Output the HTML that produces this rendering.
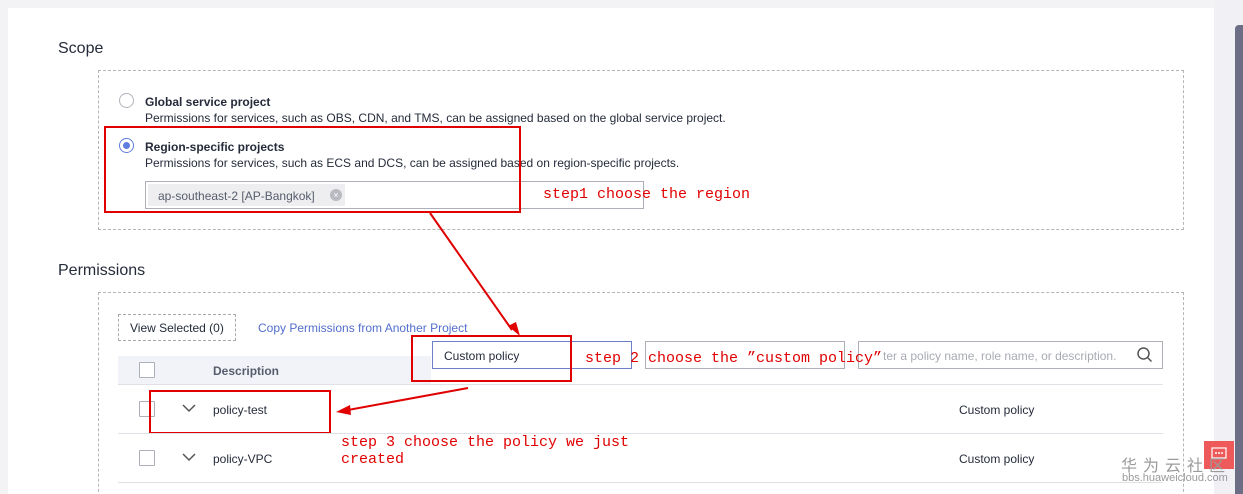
<!DOCTYPE html>
<html style="width:1243px;height:494px;overflow:hidden"><head><meta charset="utf-8"><style>
*{margin:0;padding:0;box-sizing:border-box}
body{width:1243px;height:494px;overflow:hidden;background:#f3f3f5;font-family:"Liberation Sans",sans-serif;position:relative;color:#252b3a}
.a{position:absolute}
.panel{left:8px;top:8px;width:1206px;height:486px;background:#fff}
.h{font-size:16px;color:#252b3a}
.dash{border:1px dashed #b5b5b5}
.t{font-size:12px;white-space:nowrap}
.b{font-weight:bold}
.red{border:2px solid #e00000}
.mono{font-family:"Liberation Mono",monospace;color:#e00000;font-size:15px;white-space:nowrap}
.cb{width:16px;height:16px;border:1px solid #adb0b8;background:#fff;border-radius:1px}
.line{height:1px;background:#dfe1e6}
</style></head><body>
<div class="a panel"></div>
<div class="a" style="left:1214px;top:0;width:29px;height:494px;background:#f0f0f5"></div>
<div class="a" style="left:1235px;top:25px;width:8px;height:469px;background:#6c6e86;border-radius:4px 0 0 0"></div>

<div class="a h" style="left:58px;top:40px">Scope</div>
<div class="a dash" style="left:98px;top:70px;width:1086px;height:160px"></div>

<div class="a" style="left:119px;top:93px;width:15px;height:15px;border:1px solid #b0b3bb;border-radius:50%"></div>
<div class="a t b" style="left:145px;top:95px">Global service project</div>
<div class="a t" style="left:145px;top:111px">Permissions for services, such as OBS, CDN, and TMS, can be assigned based on the global service project.</div>
<div class="a" style="left:119px;top:138px;width:15px;height:15px;border:1px solid #5e7ce0;border-radius:50%"><div style="margin:3px;width:7px;height:7px;border-radius:50%;background:#5e7ce0"></div></div>
<div class="a t b" style="left:145px;top:140px">Region-specific projects</div>
<div class="a t" style="left:145px;top:156px">Permissions for services, such as ECS and DCS, can be assigned based on region-specific projects.</div>
<div class="a" style="left:145px;top:181px;width:499px;height:28px;border:1px solid #adb0b8"></div>
<div class="a" style="left:148px;top:184px;width:197px;height:22px;background:#eeeef0"></div>
<div class="a t" style="left:158px;top:189px;color:#575d6c">ap-southeast-2 [AP-Bangkok]</div>
<div class="a" style="left:330px;top:189px;width:12px;height:12px;border-radius:50%;background:#b8bac0;color:#fff;font-size:9px;line-height:12px;text-align:center">×</div>
<div class="a red" style="left:104px;top:126px;width:417px;height:87px"></div>
<div class="a mono" style="left:543px;top:186px">step1 choose the region</div>

<div class="a h" style="left:58px;top:262px">Permissions</div>
<div class="a dash" style="left:98px;top:292px;width:1086px;height:220px"></div>

<div class="a dash" style="left:118px;top:314px;width:118px;height:27px;border-color:#aaa"></div>
<div class="a t" style="left:130px;top:321px">View Selected (0)</div>
<div class="a t" style="left:258px;top:321px;color:#526ecc">Copy Permissions from Another Project</div>

<div class="a" style="left:118px;top:356px;width:313px;height:28px;background:#f1f3f8"></div>
<div class="a cb" style="left:139px;top:362px"></div>
<div class="a t b" style="left:213px;top:364px;color:#575d6c">Description</div>

<div class="a" style="left:432px;top:341px;width:200px;height:28px;border:1px solid #6b80c8"></div>
<div class="a t" style="left:444px;top:349px">Custom policy</div>
<div class="a red" style="left:411px;top:335px;width:161px;height:47px"></div>
<div class="a" style="left:645px;top:341px;width:200px;height:28px;border:1px solid #adb0b8"></div>
<div class="a" style="left:858px;top:341px;width:305px;height:28px;border:1px solid #adb0b8"></div>
<div class="a t" style="left:883px;top:349px;color:#a8abb3">ter a policy name, role name, or description.</div>
<svg class="a" style="left:1136px;top:346px" width="18" height="18" viewBox="0 0 18 18"><circle cx="7.5" cy="7.5" r="5.5" fill="none" stroke="#555" stroke-width="1.5"/><path d="M11.5 11.5L15.5 15.5" stroke="#555" stroke-width="1.5"/></svg>
<div class="a mono" style="left:585px;top:350px">step 2 choose the ”custom policy”</div>

<div class="a line" style="left:118px;top:384px;width:1045px"></div>
<div class="a cb" style="left:139px;top:401px"></div>
<svg class="a" style="left:182px;top:403px" width="14" height="10"><path d="M1 2L7 8L13 2" fill="none" stroke="#555" stroke-width="1.5"/></svg>
<div class="a t" style="left:213px;top:403px">policy-test</div>
<div class="a t" style="left:959px;top:403px">Custom policy</div>
<div class="a red" style="left:149px;top:390px;width:182px;height:44px"></div>
<div class="a line" style="left:118px;top:433px;width:1045px"></div>
<div class="a cb" style="left:139px;top:450px"></div>
<svg class="a" style="left:182px;top:452px" width="14" height="10"><path d="M1 2L7 8L13 2" fill="none" stroke="#555" stroke-width="1.5"/></svg>
<div class="a t" style="left:213px;top:452px">policy-VPC</div>
<div class="a t" style="left:959px;top:452px">Custom policy</div>
<div class="a line" style="left:118px;top:482px;width:1045px"></div>
<div class="a mono" style="left:341px;top:434px;line-height:17px">step 3 choose the policy we just<br>created</div>

<svg class="a" style="left:0;top:0" width="1243" height="494">
<path d="M430 213L512 330" stroke="#e00000" stroke-width="2"/>
<path d="M520 336L508 326L516 322Z" fill="#e00000"/>
<path d="M468 388L348 410" stroke="#e00000" stroke-width="2"/>
<path d="M336 412L350 405L351 415Z" fill="#e00000"/>
</svg>

<div class="a" style="left:1204px;top:441px;width:30px;height:28px;background:#ee5a5a"></div>
<svg class="a" style="left:1211px;top:447px" width="16" height="14"><rect x="1" y="1" width="14" height="10" fill="none" stroke="#fff" stroke-width="1.2"/><circle cx="5" cy="6" r="1" fill="#fff"/><circle cx="8" cy="6" r="1" fill="#fff"/><circle cx="11" cy="6" r="1" fill="#fff"/></svg>
<div class="a" style="left:1121px;top:452px;font-family:'Noto Sans CJK SC',sans-serif;font-size:16px;letter-spacing:6px;color:#9a9a9a">华为云社区</div>
<div class="a" style="left:1122px;top:472px;font-size:11px;color:#9a9a9a">bbs.huaweicloud.com</div>
</body></html>
